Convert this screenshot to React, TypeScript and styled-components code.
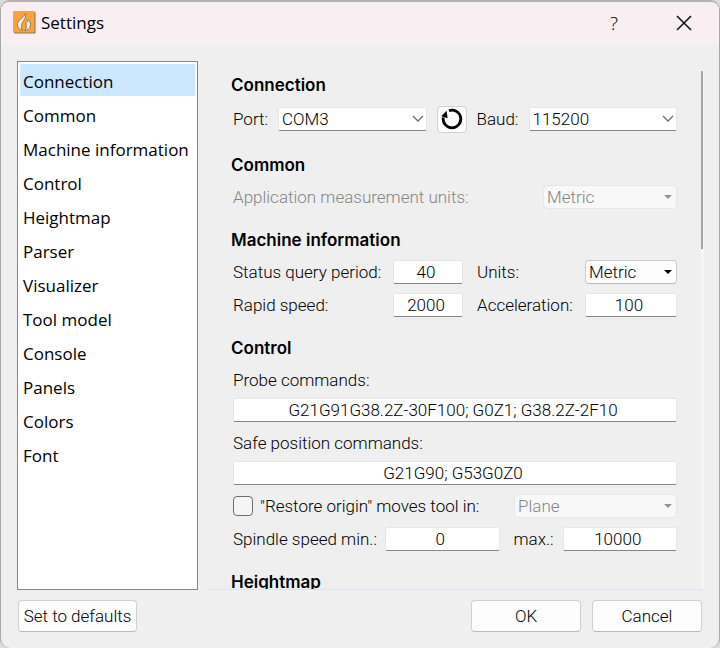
import React, { useId, useState } from "react";
import styled, { createGlobalStyle } from "styled-components";

const formFont = `Roboto, "Liberation Sans", sans-serif`;
const headingFont = `Inter, "Liberation Sans", sans-serif`;
const shellFont = `"Open Sans", "Noto Sans", sans-serif`;

const GlobalStyle = createGlobalStyle`
  *, *::before, *::after { box-sizing: border-box; }
  body { margin: 0; background: #dcdcdc; color: #000; }
  button, input, select { font: inherit; color: inherit; }
`;

const Dialog = styled.div`
  display: flex;
  flex-direction: column;
  height: 100vh;
  border: 1px solid #a9a9a9;
  border-top: 2px solid #b4b2b3;
  border-bottom: 0;
  border-radius: 10px;
  background: #efefef;
  overflow: hidden;
`;

const TitleBar = styled.header`
  display: flex;
  align-items: center;
  flex: none;
  height: 43px;
  padding: 0 12px 2px;
  background: #f9eef2;
  font-family: ${shellFont};
`;

const Title = styled.h1`
  flex: 1;
  margin: 0 0 0 5px;
  font-size: 17px;
  font-weight: 400;
  line-height: 24px;
`;

const CaptionButton = styled.button`
  display: grid;
  place-items: center;
  width: 46px;
  height: 32px;
  margin-left: 24px;
  padding: 0;
  border: 0;
  background: transparent;
  font-size: 19px;
  font-weight: 300;
  line-height: 24px;
`;

const Body = styled.div`
  display: flex;
  flex: 1;
  min-height: 0;
  gap: 9px;
  padding: 16px 15px 0 16px;
`;

const Categories = styled.nav`
  flex: none;
  width: 181px;
  padding: 2px;
  border: 1px solid #828790;
  background: #fff;
`;

const CategoryList = styled.ul`
  display: flex;
  flex-direction: column;
  gap: 2px;
  margin: 0;
  padding: 0;
  list-style: none;
`;

const Category = styled.button<{ $active: boolean }>`
  display: block;
  width: 100%;
  height: 32px;
  padding: 4px 3px 0;
  border: 0;
  border-radius: 2px;
  background: ${(p) => (p.$active ? "#cce8ff" : "transparent")};
  font-family: ${shellFont};
  font-size: 17px;
  line-height: 28px;
  text-align: left;
  white-space: nowrap;
`;

const Pane = styled.main`
  display: flex;
  flex: 1;
  min-width: 0;
  border-bottom: 1px solid #d9e6f2;
  font-family: ${formFont};
  font-size: 17px;
  font-weight: 300;
`;

const Sections = styled.div`
  display: flex;
  flex: 1;
  flex-direction: column;
  gap: 19px;
  min-width: 0;
  padding: 12px 24px 0 26px;
  overflow: hidden;
`;

const ScrollTrack = styled.div`
  flex: none;
  width: 3px;
  margin-top: 10px;
  background: #f5f5f5;
`;

const ScrollThumb = styled.div`
  width: 2px;
  height: 178px;
  background: #a3a3a3;
`;

const SectionBox = styled.section`
  display: flex;
  flex: none;
  flex-direction: column;
  gap: 9px;
`;

const Heading = styled.h2`
  margin: 0 0 -1px -2px;
  font-family: ${headingFont};
  font-size: 17px;
  font-weight: 600;
  line-height: 24px;
`;

const Row = styled.div`
  display: flex;
  align-items: center;
  gap: 10px;
  height: 24px;
`;

const PortRow = styled(Row)`
  margin: 2px 0 3px;
`;

const PairGrid = styled.div`
  display: grid;
  grid-template-columns: minmax(140px, 1fr) 70px 102px 92px;
  align-items: center;
  gap: 9px 10px;
`;

const Label = styled.label<{ $width?: number; $grow?: boolean; $muted?: boolean; $inset?: boolean }>`
  flex: ${(p) => (p.$grow ? "1" : "none")};
  width: ${(p) => (p.$width ? `${p.$width}px` : "auto")};
  padding-left: ${(p) => (p.$inset ? "4px" : "0")};
  color: ${(p) => (p.$muted ? "#858585" : "#000")};
  line-height: 24px;
  white-space: nowrap;
`;

const Stack = styled.div`
  display: flex;
  flex-direction: column;
  gap: 6px;
`;

const TextBox = styled.input`
  flex: 1;
  width: 100%;
  min-width: 0;
  height: 24px;
  min-height: 24px;
  padding: 0 6px 0 2px;
  border: 1px solid #e6e6e6;
  border-bottom-color: #868686;
  border-radius: 2px;
  background: #fff;
  text-align: center;
`;

const SelectFrame = styled.div<{ $width?: number }>`
  position: relative;
  flex: ${(p) => (p.$width ? "none" : "1")};
  width: ${(p) => (p.$width ? `${p.$width}px` : "auto")};
  min-width: 0;
`;

const Select = styled.select<{ $editable?: boolean }>`
  display: block;
  appearance: none;
  width: 100%;
  height: 24px;
  padding: 0 20px 0 3px;
  border: 1px solid ${(p) => (p.$editable ? "#e6e6e6" : "#cbcbcb")};
  border-bottom-color: ${(p) => (p.$editable ? "#868686" : "#bdbdbd")};
  border-radius: ${(p) => (p.$editable ? "2px" : "4px")};
  background: ${(p) => (p.$editable ? "#fff" : "#fdfdfd")};

  &:disabled {
    border-color: #e6e6e6;
    background: #f8f8f8;
    color: #858585;
    opacity: 1;
  }
`;

const SelectMark = styled.svg`
  position: absolute;
  top: 7px;
  right: 3px;
  width: 12px;
  height: 10px;
  pointer-events: none;
`;

const CheckBox = styled.input`
  flex: none;
  appearance: none;
  width: 20px;
  height: 20px;
  margin: 0 -3px 0 0;
  border: 1px solid #6e6e6e;
  border-radius: 4px;
  background: #f5f5f5;

  &:checked {
    background: #0067c0;
  }
`;

const PushButton = styled.button<{ $width: number }>`
  width: ${(p) => p.$width}px;
  height: 32px;
  padding: 0;
  border: 1px solid #d0d0d0;
  border-bottom-color: #bcbcbc;
  border-radius: 4px;
  background: #fdfdfd;
  white-space: nowrap;
`;

const RefreshButton = styled.button`
  display: grid;
  flex: none;
  place-items: center;
  width: 30px;
  height: 27px;
  padding: 0;
  border: 1px solid #d0d0d0;
  border-radius: 4px;
  background: #fdfdfd;
`;

const Footer = styled.footer`
  display: flex;
  flex: none;
  gap: 11px;
  padding: 10px 17px 16px;
  font-family: ${formFont};
  font-size: 17px;
  font-weight: 300;
`;

const Spacer = styled.div`
  flex: 1;
`;

function AppIcon() {
  return (
    <svg width="23" height="23" viewBox="0 0 23 23" aria-hidden="true">
      <rect x="1" y="1" width="21.500" height="21.500" rx="1" fill="#8b7458" />
      <rect x="0" y="0" width="21.500" height="21.500" rx="1" fill="#fba33c" />
      <path
        d="M9.600 19.400C5.400 18.600 3.300 14.800 5 11.200 6.400 8.300 10.200 6.600 12.600 2.600 13.200 5.600 12 8.200 10.200 10.500 8.200 13.200 7.600 16.200 9.600 19.400Z"
        fill="#f3ead9"
        stroke="#8a7250"
        strokeWidth="0.900"
      />
      <path
        d="M11.800 19.600C13.400 17.600 14 15.400 12.600 12.400 14.300 11.800 15 9.800 14.600 8 16.800 9.800 18.300 12.600 17.400 15.400 16.500 18 14.300 19.200 11.800 19.600Z"
        fill="#f3ead9"
        stroke="#8a7250"
        strokeWidth="0.900"
      />
    </svg>
  );
}

function CloseIcon() {
  return (
    <svg width="16" height="16" viewBox="0 0 16 16" aria-hidden="true">
      <path d="M1 1L15 15M15 1L1 15" stroke="#111" strokeWidth="1.500" fill="none" />
    </svg>
  );
}

function RefreshIcon() {
  return (
    <svg width="22" height="22" viewBox="0 0 22 22" aria-hidden="true">
      <path d="M8 2.700A8.800 8.800 0 1 1 2.300 9.500" stroke="#000" strokeWidth="2.800" fill="none" />
      <path d="M0.300 8.200L5.600 2.800L6.600 10.200Z" fill="#000" />
    </svg>
  );
}

interface DropDownProps {
  id?: string;
  options: string[];
  width?: number;
  editable?: boolean;
  disabled?: boolean;
  name?: string;
}

function DropDown({ id, options, width, editable, disabled, name }: DropDownProps) {
  return (
    <SelectFrame $width={width}>
      <Select id={id} aria-label={name} $editable={editable} disabled={disabled}>
        {options.map((option) => (
          <option key={option}>{option}</option>
        ))}
      </Select>
      <SelectMark viewBox="0 0 12 10" aria-hidden="true">
        {editable ? (
          <path d="M1 2L6 7L11 2" fill="none" stroke="#6b6b6b" strokeWidth="1.300" />
        ) : (
          <path d="M2 3H10L6 7Z" fill={disabled ? "#959595" : "#000"} />
        )}
      </SelectMark>
    </SelectFrame>
  );
}

function Section({ title, children }: { title: string; children?: React.ReactNode }) {
  return (
    <SectionBox>
      <Heading>{title}</Heading>
      {children}
    </SectionBox>
  );
}

function CommandField({ label, value }: { label: string; value: string }) {
  const id = useId();
  return (
    <Stack>
      <Label htmlFor={id}>{label}</Label>
      <TextBox id={id} defaultValue={value} />
    </Stack>
  );
}

const categories = [
  "Connection",
  "Common",
  "Machine information",
  "Control",
  "Heightmap",
  "Parser",
  "Visualizer",
  "Tool model",
  "Console",
  "Panels",
  "Colors",
  "Font",
];

export default function App() {
  const [active, setActive] = useState("Connection");

  return (
    <>
      <GlobalStyle />
      <Dialog>
        <TitleBar>
          <AppIcon />
          <Title>Settings</Title>
          <CaptionButton aria-label="Help">?</CaptionButton>
          <CaptionButton aria-label="Close">
            <CloseIcon />
          </CaptionButton>
        </TitleBar>

        <Body>
          <Categories>
            <CategoryList>
              {categories.map((name) => (
                <li key={name}>
                  <Category $active={name === active} onClick={() => setActive(name)}>
                    {name}
                  </Category>
                </li>
              ))}
            </CategoryList>
          </Categories>

          <Pane>
            <Sections>
              <Section title="Connection">
                <PortRow>
                  <Label htmlFor="port" $width={35}>Port:</Label>
                  <DropDown id="port" options={["COM3"]} editable />
                  <RefreshButton aria-label="Refresh ports">
                    <RefreshIcon />
                  </RefreshButton>
                  <Label htmlFor="baud" $width={42}>Baud:</Label>
                  <DropDown id="baud" options={["115200"]} editable />
                </PortRow>
              </Section>

              <Section title="Common">
                <Row>
                  <Label htmlFor="app-units" $grow $muted>Application measurement units:</Label>
                  <DropDown id="app-units" options={["Metric"]} width={134} disabled />
                </Row>
              </Section>

              <Section title="Machine information">
                <PairGrid>
                  <Label htmlFor="query">Status query period:</Label>
                  <TextBox id="query" defaultValue="40" />
                  <Label htmlFor="units" $inset>Units:</Label>
                  <DropDown id="units" options={["Metric"]} />
                  <Label htmlFor="rapid">Rapid speed:</Label>
                  <TextBox id="rapid" defaultValue="2000" />
                  <Label htmlFor="accel" $inset>Acceleration:</Label>
                  <TextBox id="accel" defaultValue="100" />
                </PairGrid>
              </Section>

              <Section title="Control">
                <CommandField label="Probe commands:" value="G21G91G38.2Z-30F100; G0Z1; G38.2Z-2F10" />
                <CommandField label="Safe position commands:" value="G21G90; G53G0Z0" />
                <Row>
                  <CheckBox type="checkbox" id="restore" />
                  <Label htmlFor="restore" $grow>"Restore origin" moves tool in:</Label>
                  <DropDown name="Restore origin movement" options={["Plane"]} width={163} disabled />
                </Row>
                <Row>
                  <Label htmlFor="spindle-min" $width={142}>Spindle speed min.:</Label>
                  <TextBox id="spindle-min" defaultValue="0" />
                  <Label htmlFor="spindle-max" $width={43} $inset>max.:</Label>
                  <TextBox id="spindle-max" defaultValue="10000" />
                </Row>
              </Section>

              <Section title="Heightmap" />
            </Sections>
            <ScrollTrack>
              <ScrollThumb />
            </ScrollTrack>
          </Pane>
        </Body>

        <Footer>
          <PushButton $width={119}>Set to defaults</PushButton>
          <Spacer />
          <PushButton $width={110}>OK</PushButton>
          <PushButton $width={110}>Cancel</PushButton>
        </Footer>
      </Dialog>
    </>
  );
}
